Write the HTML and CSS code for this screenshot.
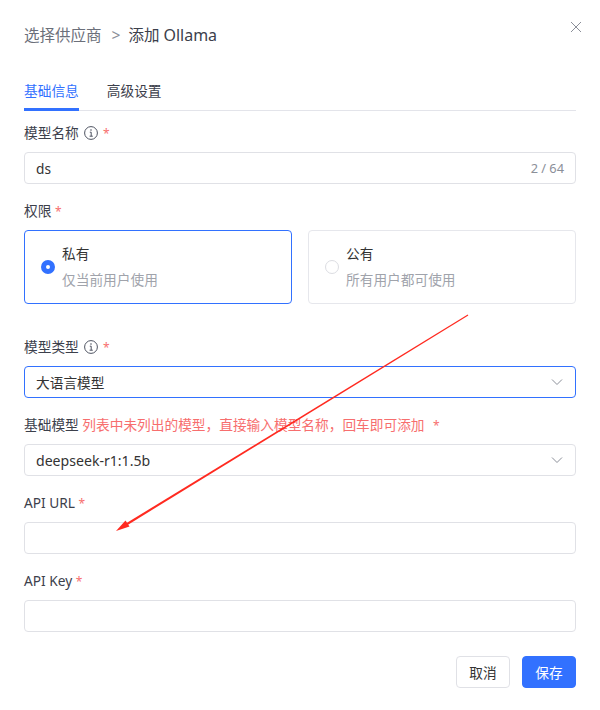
FILE: index.html
```html
<!DOCTYPE html>
<html lang="en">
<head>
  <meta charset="UTF-8">
  <title>添加 Ollama</title>
  <link rel="stylesheet" href="styles.css">
</head>
<body>
  <div class="dialog">
    <div class="header">
      <span class="crumb">选择供应商</span>
      <span class="crumb-sep">&gt;</span>
      <span class="crumb-current">添加 <span class="crumb-name">Ollama</span></span>
      <svg class="close" width="12" height="12" viewBox="0 0 12 12"><path d="M1 1l10 10M11 1L1 11" stroke="#8b8f99" stroke-width="1" fill="none"/></svg>
    </div>

    <div class="tabs">
      <div class="tab active">基础信息</div>
      <div class="tab">高级设置</div>
    </div>

    <div class="form-item">
      <div class="label">模型名称
        <svg class="info" width="14" height="14" viewBox="0 0 14 14"><circle cx="7" cy="7" r="6.4" stroke="#4e5361" fill="none"/><path d="M5.8 6.2H7.2V10.2M5.6 10.2H8.8" stroke="#4e5361" fill="none"/><circle cx="7" cy="4" r="0.8" fill="#4e5361"/></svg>
        <span class="req">*</span></div>
      <div class="input"><span>ds</span><span class="count">2 / 64</span></div>
    </div>

    <div class="form-item perm">
      <div class="label">权限 <span class="req">*</span></div>
      <div class="cards">
        <div class="card selected">
          <span class="radio on"></span>
          <div>
            <div class="card-title">私有</div>
            <div class="card-desc">仅当前用户使用</div>
          </div>
        </div>
        <div class="card">
          <span class="radio"></span>
          <div>
            <div class="card-title">公有</div>
            <div class="card-desc">所有用户都可使用</div>
          </div>
        </div>
      </div>
    </div>

    <div class="form-item">
      <div class="label">模型类型
        <svg class="info" width="14" height="14" viewBox="0 0 14 14"><circle cx="7" cy="7" r="6.4" stroke="#4e5361" fill="none"/><path d="M5.8 6.2H7.2V10.2M5.6 10.2H8.8" stroke="#4e5361" fill="none"/><circle cx="7" cy="4" r="0.8" fill="#4e5361"/></svg>
        <span class="req">*</span></div>
      <div class="input focused"><span>大语言模型</span>
        <svg class="chevron" width="12" height="8" viewBox="0 0 12 8"><path d="M1 1.5l5 5 5-5" stroke="#8b8f99" fill="none"/></svg>
      </div>
    </div>

    <div class="form-item">
      <div class="label">基础模型 <span class="hint">列表中未列出的模型，直接输入模型名称，回车即可添加</span> <span class="req wide">*</span></div>
      <div class="input"><span class="value">deepseek-r1:1.5b</span>
        <svg class="chevron" width="12" height="8" viewBox="0 0 12 8"><path d="M1 1.5l5 5 5-5" stroke="#8b8f99" fill="none"/></svg>
      </div>
    </div>

    <div class="form-item">
      <div class="label">API URL <span class="req">*</span></div>
      <div class="input"></div>
    </div>

    <div class="form-item">
      <div class="label">API Key <span class="req">*</span></div>
      <div class="input"></div>
    </div>

    <div class="footer">
      <button class="btn">取消</button>
      <button class="btn primary">保存</button>
    </div>

    <!-- red annotation drawn over the form -->
    <svg class="arrow" width="600" height="710" viewBox="0 0 600 710">
      <path d="M468.3 315.4L467.7 314.6L122.5 525.5L123.6 527.4Z" fill="#ff2a20"/>
      <path d="M116 531L125.5 520.5L129.5 526.5Z" fill="#ff2a20"/>
    </svg>
  </div>
</body>
</html>
```

FILE: styles.css
```css
* {
  box-sizing: border-box;
}
body {
  margin: 0;
  background-color: #fff;
  font-family: "Noto Sans", "Noto Sans CJK SC", sans-serif;
  font-size: 13.7px;
  color: #3c404b;
}
.dialog {
  position: relative;
  width: 600px;
  height: 710px;
  padding: 24px 24px 0;
}
.header {
  display: flex;
  align-items: center;
  height: 22px;
  font-size: 15.5px;
  line-height: 22px;
}
.crumb {
  color: #6b6f7a;
}
.crumb-sep {
  margin: 0 8px 0 10px;
  color: #8b8f99;
}
.crumb-current {
  color: #3c404b;
}
.crumb-name {
  font-size: 16px;
}
.close {
  position: absolute;
  top: 21px;
  right: 18px;
}
.tabs {
  display: flex;
  gap: 28px;
  height: 41px;
  margin-top: 24px;
  border-bottom: 1px solid #e3e4ea;
}
.tab {
  height: 41px;
  padding-top: 10px;
  line-height: 22px;
  color: #3c404b;
}
.tab.active {
  color: #3271ff;
  border-bottom: 3px solid #3271ff;
}
.form-item {
  margin-bottom: 16px;
}
.tabs + .form-item {
  margin-top: 11px;
}
.form-item.perm {
  margin-bottom: 32px;
}
.label {
  height: 22px;
  margin-bottom: 8px;
  line-height: 22px;
  white-space: nowrap;
  color: #3c404b;
}
.info {
  margin: 0 1px 0 2px;
  vertical-align: -2px;
}
.req {
  font-size: 12px;
  color: #f76e6e;
}
.req.wide {
  margin-left: 5px;
}
.hint {
  color: #f76e6e;
}
.input {
  display: flex;
  align-items: center;
  justify-content: space-between;
  height: 32px;
  padding: 0 11px;
  border: 1px solid #e0e1e6;
  border-radius: 4px;
  color: #333;
}
.input.focused {
  border-color: #3271ff;
}
.value {
  font-size: 14.1px;
}
.count {
  font-size: 12.8px;
  color: #8b8f99;
}
.chevron {
  margin-right: 1px;
}
.cards {
  display: flex;
  gap: 16px;
}
.card {
  display: flex;
  align-items: center;
  flex: 1;
  height: 74px;
  padding-left: 16px;
  border: 1px solid #e6e7ec;
  border-radius: 4px;
}
.card.selected {
  border-color: #3271ff;
}
.radio {
  width: 14px;
  height: 14px;
  margin-right: 7px;
  border: 1px solid #dcdde2;
  border-radius: 50%;
}
.radio.on {
  border: 5px solid #3271ff;
  background-color: #fff;
}
.card-title {
  line-height: 22px;
  color: #333;
}
.card-desc {
  margin-top: 4px;
  line-height: 22px;
  color: #a0a3ab;
}
.footer {
  display: flex;
  justify-content: flex-end;
  gap: 12px;
  margin-top: 24px;
}
.btn {
  width: 54px;
  height: 32px;
  padding: 0;
  border: 1px solid #e0e1e6;
  border-radius: 4px;
  background-color: #fff;
  font-family: inherit;
  font-size: 13.7px;
  color: #333;
}
.btn.primary {
  border-color: #3271ff;
  background-color: #3271ff;
  color: #fff;
}
.arrow {
  position: absolute;
  top: 0;
  left: 0;
  pointer-events: none;
}
```
